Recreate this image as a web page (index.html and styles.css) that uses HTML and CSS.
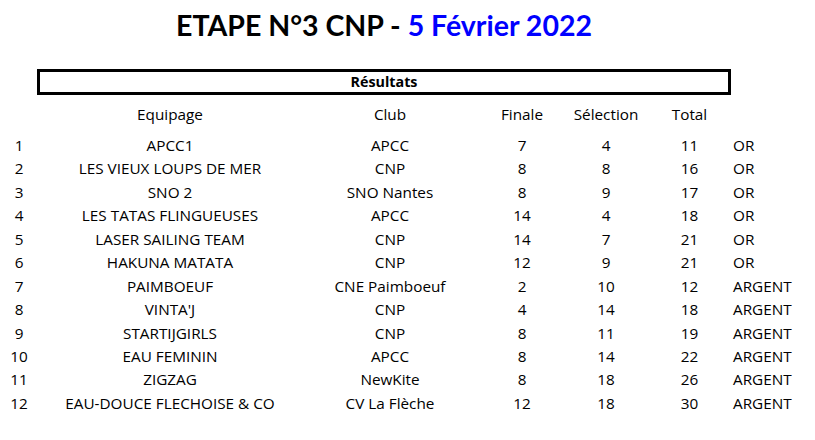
FILE: index.html
```html
<!DOCTYPE html>
<html lang="fr">
<head>
<meta charset="utf-8">
<title>ETAPE N°3 CNP</title>
<link rel="stylesheet" href="styles.css">
</head>
<body>
<div class="page">
  <h1 class="title">ETAPE N°3 CNP - <span class="date">5 Février 2022</span></h1>
  <div class="banner">Résultats</div>
  <div class="table">
    <div class="row head">
      <span></span><span>Equipage</span><span>Club</span><span>Finale</span><span>Sélection</span><span>Total</span><span></span>
    </div>
    <div class="row"><span>1</span><span>APCC1</span><span>APCC</span><span>7</span><span>4</span><span>11</span><span class="medal">OR</span></div>
    <div class="row"><span>2</span><span>LES VIEUX LOUPS DE MER</span><span>CNP</span><span>8</span><span>8</span><span>16</span><span class="medal">OR</span></div>
    <div class="row"><span>3</span><span>SNO 2</span><span>SNO Nantes</span><span>8</span><span>9</span><span>17</span><span class="medal">OR</span></div>
    <div class="row"><span>4</span><span>LES TATAS FLINGUEUSES</span><span>APCC</span><span>14</span><span>4</span><span>18</span><span class="medal">OR</span></div>
    <div class="row"><span>5</span><span>LASER SAILING TEAM</span><span>CNP</span><span>14</span><span>7</span><span>21</span><span class="medal">OR</span></div>
    <div class="row"><span>6</span><span>HAKUNA MATATA</span><span>CNP</span><span>12</span><span>9</span><span>21</span><span class="medal">OR</span></div>
    <div class="row"><span>7</span><span>PAIMBOEUF</span><span>CNE Paimboeuf</span><span>2</span><span>10</span><span>12</span><span class="medal">ARGENT</span></div>
    <div class="row"><span>8</span><span>VINTA'J</span><span>CNP</span><span>4</span><span>14</span><span>18</span><span class="medal">ARGENT</span></div>
    <div class="row"><span>9</span><span>STARTIJGIRLS</span><span>CNP</span><span>8</span><span>11</span><span>19</span><span class="medal">ARGENT</span></div>
    <div class="row"><span>10</span><span>EAU FEMININ</span><span>APCC</span><span>8</span><span>14</span><span>22</span><span class="medal">ARGENT</span></div>
    <div class="row"><span>11</span><span>ZIGZAG</span><span>NewKite</span><span>8</span><span>18</span><span>26</span><span class="medal">ARGENT</span></div>
    <div class="row"><span>12</span><span>EAU-DOUCE FLECHOISE &amp; CO</span><span>CV La Flèche</span><span>12</span><span>18</span><span>30</span><span class="medal">ARGENT</span></div>
  </div>
</div>
</body>
</html>
```
FILE: styles.css
```css
html, body {
  margin: 0;
  padding: 0;
  background: #ffffff;
}
body {
  font-family: "Open Sans", Lato, "Liberation Sans", sans-serif;
  color: #000;
  width: 815px;
  height: 440px;
  overflow: hidden;
}
.page {
  padding-top: 8px;
}
.title {
  margin: 0 0 0 37px;
  width: 694px;
  text-align: center;
  font-family: Lato, "Open Sans", sans-serif;
  font-size: 28.5px;
  font-weight: 700;
  line-height: 34px;
}
.date {
  color: #0000ff;
}
.banner {
  margin: 27px 0 0 37px;
  width: 688px;
  height: 20px;
  border: 3px solid #000;
  text-align: center;
  font-weight: 700;
  font-size: 14.3px;
  line-height: 20px;
}
.table {
  margin-top: 8px;
  font-size: 15.3px;
}
.row {
  display: grid;
  grid-template-columns: 38px 264px 176px 88px 80px 87px 1fr;
  height: 23.45px;
  line-height: 23.45px;
  text-align: center;
}
.row.head {
  height: 31px;
}
.medal {
  text-align: left;
}
```
